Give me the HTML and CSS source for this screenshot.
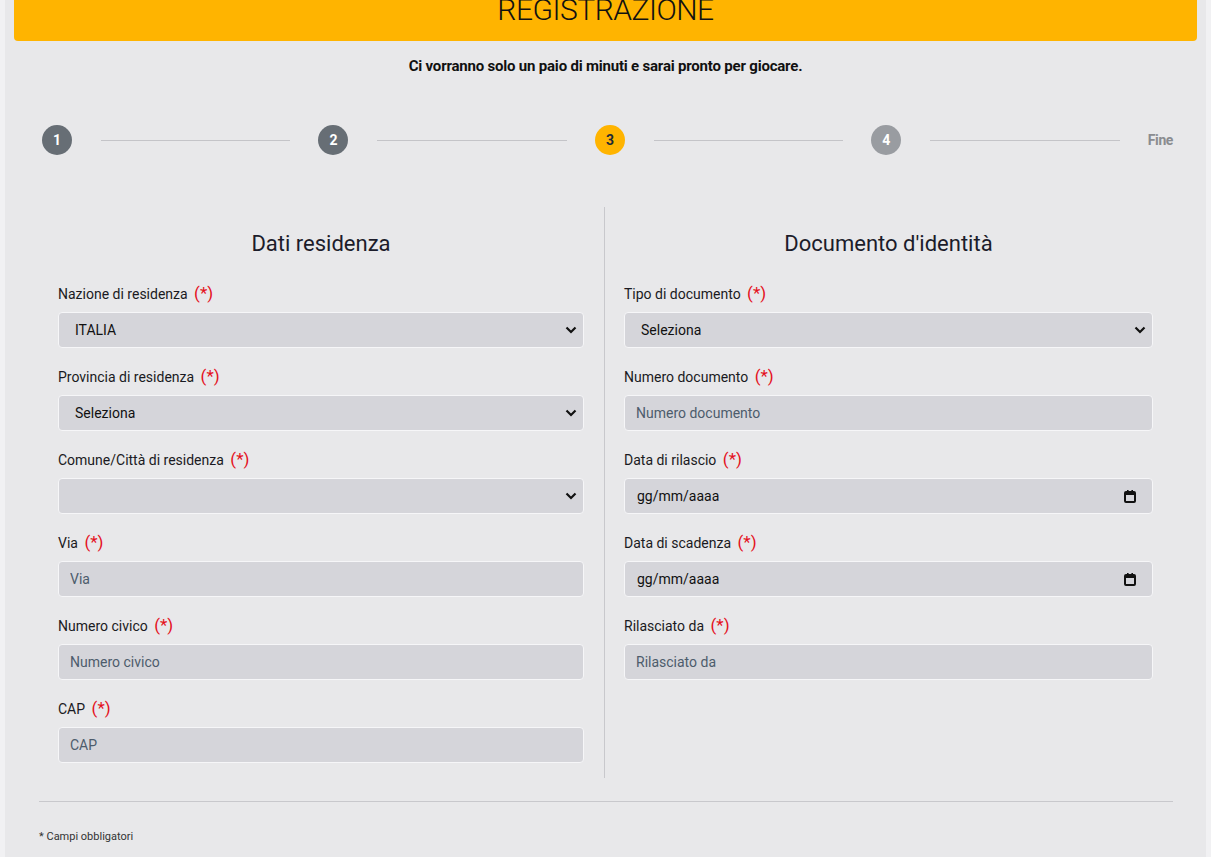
FILE: index.html
```html
<!DOCTYPE html>
<html lang="it">
<head>
    <meta charset="UTF-8">
    <meta name="viewport" content="width=device-width, initial-scale=1.0">
    <title>Registrazione</title>
    <link rel="stylesheet" href="styles.css">
</head>
<body>
<div class="page">
    <header class="top">
        <h1>REGISTRAZIONE</h1>
    </header>

    <div class="content">
        <p class="intro">Ci vorranno solo un paio di minuti e sarai pronto per giocare.</p>

        <div class="steps">
            <span class="step done">1</span>
            <span class="line"></span>
            <span class="step done">2</span>
            <span class="line"></span>
            <span class="step active">3</span>
            <span class="line"></span>
            <span class="step next">4</span>
            <span class="line"></span>
            <span class="fine">Fine</span>
        </div>

        <form class="columns">
            <div class="col left">
                <h2>Dati residenza</h2>

                <div class="group">
                    <label for="nazione">Nazione di residenza <span class="req">(*)</span></label>
                    <div class="field">
                        <select id="nazione"><option>ITALIA</option></select>
                        <svg class="chev" width="12" height="8" viewBox="0 0 12 8"><path d="M1.5 1.5 6 6l4.5-4.5" fill="none" stroke="#111" stroke-width="2.2"/></svg>
                    </div>
                </div>

                <div class="group">
                    <label for="provincia">Provincia di residenza <span class="req">(*)</span></label>
                    <div class="field">
                        <select id="provincia"><option>Seleziona</option></select>
                        <svg class="chev" width="12" height="8" viewBox="0 0 12 8"><path d="M1.5 1.5 6 6l4.5-4.5" fill="none" stroke="#111" stroke-width="2.2"/></svg>
                    </div>
                </div>

                <div class="group">
                    <label for="comune">Comune/Città di residenza <span class="req">(*)</span></label>
                    <div class="field">
                        <select id="comune"><option></option></select>
                        <svg class="chev" width="12" height="8" viewBox="0 0 12 8"><path d="M1.5 1.5 6 6l4.5-4.5" fill="none" stroke="#111" stroke-width="2.2"/></svg>
                    </div>
                </div>

                <div class="group">
                    <label for="via">Via <span class="req">(*)</span></label>
                    <div class="field">
                        <input type="text" id="via" placeholder="Via">
                    </div>
                </div>

                <div class="group">
                    <label for="civico">Numero civico <span class="req">(*)</span></label>
                    <div class="field">
                        <input type="text" id="civico" placeholder="Numero civico">
                    </div>
                </div>

                <div class="group">
                    <label for="cap">CAP <span class="req">(*)</span></label>
                    <div class="field">
                        <input type="text" id="cap" placeholder="CAP">
                    </div>
                </div>
            </div>

            <div class="col right">
                <h2>Documento d'identità</h2>

                <div class="group">
                    <label for="tipo">Tipo di documento <span class="req">(*)</span></label>
                    <div class="field">
                        <select id="tipo"><option>Seleziona</option></select>
                        <svg class="chev" width="12" height="8" viewBox="0 0 12 8"><path d="M1.5 1.5 6 6l4.5-4.5" fill="none" stroke="#111" stroke-width="2.2"/></svg>
                    </div>
                </div>

                <div class="group">
                    <label for="numero">Numero documento <span class="req">(*)</span></label>
                    <div class="field">
                        <input type="text" id="numero" placeholder="Numero documento">
                    </div>
                </div>

                <div class="group">
                    <label for="rilascio">Data di rilascio <span class="req">(*)</span></label>
                    <div class="field date">
                        <input type="text" id="rilascio" placeholder="gg/mm/aaaa">
                        <svg class="cal" width="12" height="13" viewBox="0 0 12 13"><rect x="1" y="2" width="10" height="10" rx="1" fill="none" stroke="#111" stroke-width="2"/><rect x="1" y="2" width="10" height="3" fill="#111"/><rect x="3" y="0" width="1.6" height="3" fill="#111"/><rect x="7.4" y="0" width="1.6" height="3" fill="#111"/></svg>
                    </div>
                </div>

                <div class="group">
                    <label for="scadenza">Data di scadenza <span class="req">(*)</span></label>
                    <div class="field date">
                        <input type="text" id="scadenza" placeholder="gg/mm/aaaa">
                        <svg class="cal" width="12" height="13" viewBox="0 0 12 13"><rect x="1" y="2" width="10" height="10" rx="1" fill="none" stroke="#111" stroke-width="2"/><rect x="1" y="2" width="10" height="3" fill="#111"/><rect x="3" y="0" width="1.6" height="3" fill="#111"/><rect x="7.4" y="0" width="1.6" height="3" fill="#111"/></svg>
                    </div>
                </div>

                <div class="group">
                    <label for="ente">Rilasciato da <span class="req">(*)</span></label>
                    <div class="field">
                        <input type="text" id="ente" placeholder="Rilasciato da">
                    </div>
                </div>
            </div>
        </form>

        <hr class="sep">
        <p class="note">* Campi obbligatori</p>
    </div>
</div>
</body>
</html>
```

FILE: styles.css
```css
body {
    margin: 0;
    background-color: #f1f1f3;
    font-family: Roboto, "Liberation Sans", sans-serif;
    color: #1a1a22;
}
.page {
    margin: 0 5px;
    min-height: 100vh;
    background-color: #e8e8ea;
    overflow: hidden;
}
.top {
    margin: 0 9px;
    height: 41px;
    background-color: #ffb400;
    border-radius: 0 0 4px 4px;
    overflow: hidden;
    text-align: center;
}
.top h1 {
    margin: -8px 0 0;
    font-size: 30px;
    line-height: 36px;
    font-weight: 300;
    letter-spacing: -0.5px;
    color: #111;
}
.content {
    padding: 0 33px;
}
.intro {
    margin: 15px 0 0;
    text-align: center;
    font-size: 15px;
    line-height: 20px;
    font-weight: bold;
    letter-spacing: -0.2px;
    color: #111;
}
.steps {
    display: flex;
    align-items: center;
    margin-top: 49px;
    padding-left: 4px;
}
.step {
    width: 30px;
    height: 30px;
    flex: none;
    border-radius: 50%;
    display: flex;
    align-items: center;
    justify-content: center;
    font-size: 14px;
    font-weight: bold;
    color: #fff;
}
.step.done {
    background-color: #676e75;
}
.step.active {
    background-color: #ffb400;
    color: #1e2a36;
}
.step.next {
    background-color: #999ca1;
}
.line {
    flex: 1;
    height: 1px;
    margin: 0 28px 0 29px;
    background-color: #c4c4c8;
}
.steps .line:last-of-type {
    margin-right: 24px;
}
.fine {
    font-size: 14px;
    font-weight: bold;
    letter-spacing: -0.4px;
    color: #8a8c90;
}
.columns {
    display: grid;
    grid-template-columns: 567px 1fr;
    margin-top: 52px;
}
.col {
    padding: 23px 20px 15px;
}
.col.left {
    border-right: 1px solid #c8c8cc;
}
.col.right {
    padding-left: 19px;
}
.col h2 {
    margin: 0 0 26px;
    text-align: center;
    font-size: 22px;
    line-height: 28px;
    font-weight: 400;
    color: #1c1c2a;
}
.group {
    margin-bottom: 19px;
}
.group:last-child {
    margin-bottom: 0;
}
.group label {
    display: block;
    height: 20px;
    margin-bottom: 8px;
    font-size: 14px;
    line-height: 20px;
    color: #1a1a22;
}
.req {
    margin-left: 3px;
    font-size: 17px;
    line-height: 17px;
    color: #e4101c;
}
.field {
    display: flex;
    align-items: center;
    height: 36px;
    box-sizing: border-box;
    border: 1px solid #f6f6f8;
    border-radius: 4px;
    background-color: #d5d5da;
}
.field select,
.field input {
    flex: 1;
    min-width: 0;
    height: 100%;
    border: none;
    outline: none;
    background: transparent;
    font-family: inherit;
    font-size: 14px;
    color: #111;
    appearance: none;
}
.field select {
    padding: 0 16px;
}
.field input {
    padding: 0 11px;
}
.field input::placeholder {
    color: #4d5c6c;
}
.field.date input {
    padding-left: 12px;
}
.field.date input::placeholder {
    color: #111;
}
.chev {
    flex: none;
    margin-right: 6px;
}
.cal {
    flex: none;
    margin-right: 16px;
}
.sep {
    margin: 23px 0 0 1px;
    border: none;
    border-top: 1px solid #c8c8cc;
}
.note {
    margin: 28px 0 10px 1px;
    font-size: 11px;
    line-height: 14px;
    color: #333;
}
```
